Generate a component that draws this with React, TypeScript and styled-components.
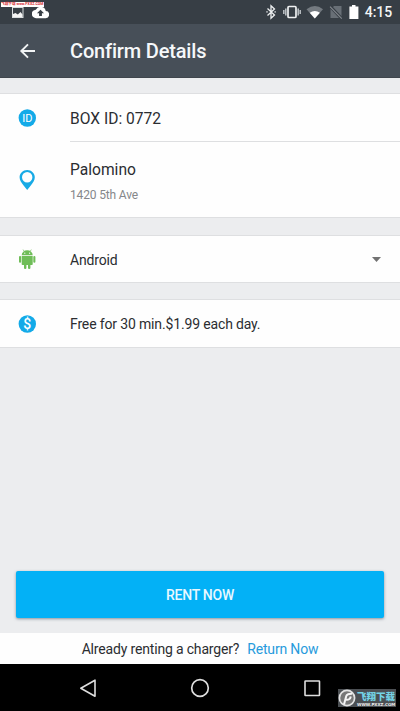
import React from 'react';
import styled, { createGlobalStyle } from 'styled-components';

const GlobalStyle = createGlobalStyle`
  * { box-sizing: border-box; }
  body { margin: 0; background: #ecedef; font-family: Roboto, 'Noto Sans CJK SC', sans-serif; }
`;

const Screen = styled.div`
  position: relative;
  width: 400px;
  height: 711px;
  display: flex;
  flex-direction: column;
  overflow: hidden;
  background: #ecedef;
  color: #2b2d31;
`;

const StatusBar = styled.header`
  height: 24px;
  flex: none;
  display: flex;
  align-items: center;
  justify-content: space-between;
  padding: 0 8px 0 10px;
  background: #373e45;
`;

const StatusGroup = styled.div<{ $gap: number }>`
  display: flex;
  align-items: center;
  gap: ${(p) => p.$gap}px;
`;

const Clock = styled.span`
  margin-left: 1px;
  font-size: 14px;
  font-weight: 500;
  line-height: 24px;
  letter-spacing: -0.1px;
  color: #f3f5f6;
`;

const AppBar = styled.div`
  height: 54px;
  flex: none;
  display: flex;
  align-items: center;
  padding-left: 19px;
  background: #474f58;
  border-bottom: 1px solid #40464d;
`;

const BackButton = styled.button`
  display: flex;
  width: 51px;
  padding: 0;
  border: 0;
  background: none;
`;

const Title = styled.h1`
  margin: 0;
  font-size: 20px;
  font-weight: 500;
  line-height: 24px;
  letter-spacing: -0.17px;
  color: #f6f8fa;
`;

const Content = styled.main`
  flex: 1;
  display: flex;
  flex-direction: column;
  padding-top: 15px;
`;

const Card = styled.section<{ $gap: number }>`
  margin-bottom: ${(p) => p.$gap}px;
  background: #fefefe;
  border-top: 1px solid #dedfe1;
  border-bottom: 1px solid #dedfe1;
`;

const Row = styled.div<{ $height: number }>`
  height: ${(p) => p.$height}px;
  display: flex;
  align-items: stretch;
`;

const IconCell = styled.div`
  width: 70px;
  flex: none;
  display: flex;
  align-items: center;
  padding-left: 17px;
`;

const RowBody = styled.div<{ $divided?: boolean; $drop?: number }>`
  flex: 1;
  display: flex;
  flex-direction: column;
  justify-content: center;
  padding-top: ${(p) => p.$drop ?? 0}px;
  border-bottom: ${(p) => (p.$divided ? '1px solid #dedfe1' : '0')};
`;

const Primary = styled.div`
  font-size: 15.6px;
  line-height: 22px;
`;

const Label = styled.div`
  font-size: 14px;
  line-height: 20px;
  letter-spacing: -0.15px;
`;

const Secondary = styled.div`
  margin-top: 5px;
  font-size: 12px;
  line-height: 18px;
  letter-spacing: -0.15px;
  color: #85878a;
`;

const CaretCell = styled.div`
  display: flex;
  align-items: center;
  padding-right: 19px;
`;

const RentButton = styled.button`
  height: 47px;
  margin: auto 16px 15px;
  padding: 0;
  border: 0;
  border-radius: 2px;
  background: #03b1f6;
  box-shadow: 0 1px 3px rgba(40, 60, 80, 0.5);
  color: #e9f8ff;
  font: 500 14px Roboto, sans-serif;
  letter-spacing: -0.25px;
`;

const Footer = styled.footer`
  height: 31px;
  flex: none;
  display: flex;
  align-items: center;
  justify-content: center;
  gap: 8px;
  padding-top: 1px;
  background: #fefefe;
  font-size: 14px;
  letter-spacing: -0.17px;
`;

const ReturnLink = styled.a`
  color: #279bdc;
`;

const NavBar = styled.nav`
  height: 47px;
  flex: none;
  display: grid;
  grid-template-columns: repeat(3, 112px);
  justify-content: center;
  align-items: center;
  justify-items: center;
  background: #000;
`;

const TopStamp = styled.div`
  position: absolute;
  top: 2px;
  left: 1px;
  height: 5px;
  display: flex;
  align-items: center;
  background: #fff;
  color: #d51f30;
  font-size: 3.65px;
  font-weight: 700;
  line-height: 5px;
  white-space: nowrap;
`;

const Stamp = styled.div`
  position: absolute;
  right: 4px;
  bottom: 4px;
  width: 58px;
  height: 18px;
  display: flex;
  align-items: center;
  gap: 1px;
  background: #4b4f53;
`;

const StampMark = styled.svg`
  flex: none;
`;

const StampText = styled.div`
  display: flex;
  flex-direction: column;
  white-space: nowrap;
`;

const StampName = styled.span`
  color: #74d3e6;
  font: 900 9.5px/12px 'Noto Sans CJK SC', sans-serif;
`;

const StampSite = styled.span`
  color: #eee;
  font: 700 4px/5px 'DejaVu Sans', sans-serif;
`;

const BadgeText = styled.text`
  font-family: Roboto, sans-serif;
  fill: #fff;
  text-anchor: middle;
`;

const PictureIcon = () => (
  <svg width="16" height="16" viewBox="0 0 16 16">
    <path fill="#d9dddf" fillRule="evenodd" d="M2 3h11.5v11H2zM3 4v9h9.5V4z" />
    <path fill="#f5f5f5" d="M3 13v-3l2.5-1 2.3 1.5L10.5 8l2 2.5V13z" />
  </svg>
);

const CloudIcon = () => (
  <svg width="17" height="17" viewBox="0 0 24 24">
    <path fill="#fff" d="M19.4 10A7.5 7.5 0 0 0 5.4 8 6 6 0 0 0 6 20h13a5 5 0 0 0 .4-10zM14 13v4h-4v-4H7l5-5 5 5z" />
  </svg>
);

const BluetoothIcon = () => (
  <svg width="14" height="16" viewBox="0 0 14 16" fill="none" stroke="#eef0f1" strokeWidth="1.3">
    <path d="M3.5 4.5 10.5 11 7 14.3V1.7L10.5 5 3.5 11.5" />
    <path strokeWidth="1.8" d="M2.5 7.9h1M10.6 7.9h1" />
  </svg>
);

const VibrateIcon = () => (
  <svg width="18" height="16" viewBox="0 0 18 16" fill="none">
    <rect x="5" y="2.5" width="8" height="11" rx="1" stroke="#eef0f1" strokeWidth="1.7" />
    <path stroke="#b6bbbf" strokeWidth="1.6" d="M2.8 4.5v7M.8 6v4M15.2 4.5v7M17.2 6v4" />
  </svg>
);

const WifiIcon = () => (
  <svg width="18" height="16" viewBox="0 0 18 16">
    <path fill="#747a80" d="M.5 5.3Q9-1.3 17 5.3L8.8 14.5z" />
    <path fill="#fff" d="M3.7 8.7Q8.8 5.4 13.9 8.7L8.8 14.5z" />
  </svg>
);

const NoSimIcon = () => (
  <svg width="14" height="16" viewBox="0 0 14 16">
    <path fill="#686f76" d="M5 2h7.5v12h-11V5.5z" />
    <path stroke="#373e45" strokeWidth="3" d="m1 2 12 13" />
    <path stroke="#858a90" strokeWidth="1.1" d="m1 2.7 11.8 12" />
  </svg>
);

const BatteryIcon = () => (
  <svg width="11" height="16" viewBox="0 0 11 16">
    <path fill="#fff" d="M4 1h3.5v1.4h2.9V15h-9V2.4H4z" />
  </svg>
);

const BackIcon = () => (
  <svg width="18" height="18" viewBox="0 0 18 18" fill="none" stroke="#f2f4f5" strokeWidth="1.9">
    <path d="M16 9H2.5M9 2.3 2.3 9 9 15.7" />
  </svg>
);

const IdIcon = () => (
  <svg width="20" height="20" viewBox="0 0 20 20">
    <circle cx="10.3" cy="10" r="8.7" fill="#13aae8" />
    <BadgeText x="10.4" y="13.9" fontSize="11">ID</BadgeText>
  </svg>
);

const PinIcon = () => (
  <svg width="20" height="22" viewBox="0 0 20 22">
    <path
      fill="#18aae5"
      fillRule="evenodd"
      d="M10.2 1c4.3 0 7.6 3.3 7.6 7.3 0 3-1.8 5.5-4.2 8.4l-3.4 4.3-3.4-4.3C4.4 13.8 2.6 11.3 2.6 8.3 2.6 4.3 5.9 1 10.2 1zm0 2a5.2 5.2 0 1 0 0 10.4 5.2 5.2 0 0 0 0-10.4z"
    />
  </svg>
);

const AndroidIcon = () => (
  <svg width="20" height="22" viewBox="0 0 20 22" fill="#6fbd58">
    <path d="M4.7 7.3a5.5 5 0 0 1 11 0z" />
    <path stroke="#6fbd58" strokeWidth=".7" d="m7.4 3.6-1.3-2M13 3.6l1.3-2" />
    <path d="M4.7 8h11v8.2q0 .8-.8.8H5.5q-.8 0-.8-.8z" />
    <rect x="2" y="8" width="2.1" height="6.7" rx="1" />
    <rect x="16.3" y="8" width="2.1" height="6.7" rx="1" />
    <rect x="7" y="15" width="2.4" height="6" rx="1.1" />
    <rect x="11" y="15" width="2.4" height="6" rx="1.1" />
    <circle cx="7.8" cy="5.2" r=".6" fill="#fff" />
    <circle cx="12.6" cy="5.2" r=".6" fill="#fff" />
  </svg>
);

const DollarIcon = () => (
  <svg width="20" height="20" viewBox="0 0 20 20">
    <circle cx="10.3" cy="10" r="8.7" fill="#13aae8" />
    <BadgeText x="10.3" y="15" fontSize="14" fontWeight="500">$</BadgeText>
  </svg>
);

const StampLogo = () => (
  <StampMark width="18" height="18" viewBox="0 0 18 18">
    <circle cx="9" cy="9" r="7.6" fill="#777" stroke="#e3e3e3" strokeWidth="1.7" />
    <path fill="none" stroke="#f4f4f4" strokeWidth="2" d="M6 15.5 8.3 7Q9 4.5 14 4.7M7.5 10.5Q12 11.5 12.8 7.5" />
  </StampMark>
);

export default function App() {
  return (
    <Screen>
      <GlobalStyle />
      <StatusBar>
        <StatusGroup $gap={6}>
          <PictureIcon />
          <CloudIcon />
        </StatusGroup>
        <StatusGroup $gap={5}>
          <BluetoothIcon />
          <VibrateIcon />
          <WifiIcon />
          <NoSimIcon />
          <BatteryIcon />
          <Clock>4:15</Clock>
        </StatusGroup>
      </StatusBar>
      <AppBar>
        <BackButton aria-label="Back"><BackIcon /></BackButton>
        <Title>Confirm Details</Title>
      </AppBar>
      <Content>
        <Card $gap={17}>
          <Row $height={48}>
            <IconCell><IdIcon /></IconCell>
            <RowBody $divided $drop={2}><Primary>BOX ID: 0772</Primary></RowBody>
          </Row>
          <Row $height={75}>
            <IconCell><PinIcon /></IconCell>
            <RowBody $drop={3}>
              <Primary>Palomino</Primary>
              <Secondary>1420 5th Ave</Secondary>
            </RowBody>
          </Row>
        </Card>
        <Card $gap={16}>
          <Row $height={46}>
            <IconCell><AndroidIcon /></IconCell>
            <RowBody $drop={2}><Label>Android</Label></RowBody>
            <CaretCell>
              <svg width="9" height="5" viewBox="0 0 9 5"><path fill="#727272" d="M0 0h9L4.5 5z" /></svg>
            </CaretCell>
          </Row>
        </Card>
        <Card $gap={0}>
          <Row $height={47}>
            <IconCell><DollarIcon /></IconCell>
            <RowBody><Label>Free for 30 min.$1.99 each day.</Label></RowBody>
          </Row>
        </Card>
        <RentButton>RENT NOW</RentButton>
      </Content>
      <Footer>
        <span>Already renting a charger?</span>
        <ReturnLink>Return Now</ReturnLink>
      </Footer>
      <NavBar>
        <svg width="20" height="20" viewBox="0 0 20 20" fill="none" stroke="#dedede" strokeWidth="1.6" strokeLinejoin="round">
          <path d="M17 2.2v16L2.8 10.2z" />
        </svg>
        <svg width="20" height="20" viewBox="0 0 20 20" fill="none" stroke="#dedede" strokeWidth="1.7">
          <circle cx="10" cy="10" r="8.3" />
        </svg>
        <svg width="20" height="20" viewBox="0 0 20 20" fill="none" stroke="#dedede" strokeWidth="1.6">
          <rect x="3" y="3" width="14.5" height="14.5" rx=".5" />
        </svg>
      </NavBar>
      <TopStamp>飞翔下载 www.PXXZ.COM</TopStamp>
      <Stamp>
        <StampLogo />
        <StampText>
          <StampName>飞翔下载</StampName>
          <StampSite>WWW.PXXZ.COM</StampSite>
        </StampText>
      </Stamp>
    </Screen>
  );
}
